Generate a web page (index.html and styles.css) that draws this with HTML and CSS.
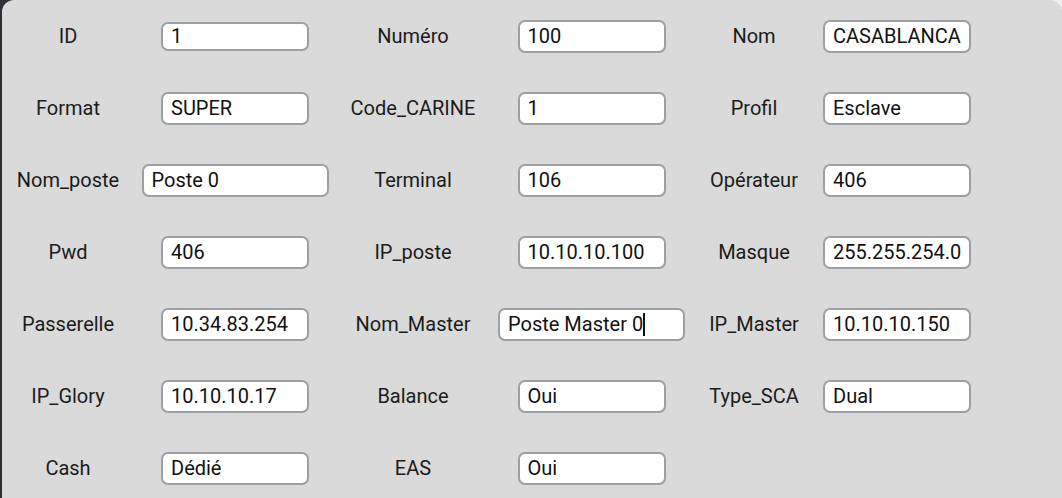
FILE: index.html
```html
<!DOCTYPE html>
<html lang="fr">
<head>
<meta charset="utf-8">
<title>Poste</title>
<link rel="stylesheet" href="styles.css">
</head>
<body>
<div class="panel">
  <div class="grid">
    <div class="label">ID</div><div class="cell"><div class="field short">1</div></div>
    <div class="label">Numéro</div><div class="cell"><div class="field">100</div></div>
    <div class="label">Nom</div><div class="cell"><div class="field">CASABLANCA</div></div>

    <div class="label">Format</div><div class="cell"><div class="field">SUPER</div></div>
    <div class="label">Code_CARINE</div><div class="cell"><div class="field">1</div></div>
    <div class="label">Profil</div><div class="cell"><div class="field">Esclave</div></div>

    <div class="label">Nom_poste</div><div class="cell"><div class="field wide">Poste 0</div></div>
    <div class="label">Terminal</div><div class="cell"><div class="field">106</div></div>
    <div class="label">Opérateur</div><div class="cell"><div class="field">406</div></div>

    <div class="label">Pwd</div><div class="cell"><div class="field">406</div></div>
    <div class="label">IP_poste</div><div class="cell"><div class="field">10.10.10.100</div></div>
    <div class="label">Masque</div><div class="cell"><div class="field">255.255.254.0</div></div>

    <div class="label">Passerelle</div><div class="cell"><div class="field">10.34.83.254</div></div>
    <div class="label">Nom_Master</div><div class="cell"><div class="field wide">Poste Master 0<span class="caret"></span></div></div>
    <div class="label">IP_Master</div><div class="cell"><div class="field">10.10.10.150</div></div>

    <div class="label">IP_Glory</div><div class="cell"><div class="field">10.10.10.17</div></div>
    <div class="label">Balance</div><div class="cell"><div class="field">Oui</div></div>
    <div class="label">Type_SCA</div><div class="cell"><div class="field">Dual</div></div>

    <div class="label">Cash</div><div class="cell"><div class="field">Dédié</div></div>
    <div class="label">EAS</div><div class="cell"><div class="field">Oui</div></div>
  </div>
</div>
</body>
</html>
```
FILE: styles.css
```css
html, body {
  margin: 0;
  padding: 0;
  height: 100%;
}
body {
  background: linear-gradient(to right, #2d3034 0 40px, #eeeeee 40px);
  font-family: Roboto, "Liberation Sans", sans-serif;
  font-size: 20px;
  color: #1b1b1b;
  overflow: hidden;
}
.panel {
  margin-left: 2px;
  height: 100%;
  background: #dadada;
  border-top-left-radius: 12px;
  border-top-right-radius: 12px;
}
.grid {
  display: grid;
  grid-template-columns: 132px 202px 154px 203px 122px 164px;
  grid-auto-rows: 72px;
  align-items: center;
}
.label {
  text-align: center;
  white-space: nowrap;
}
.cell {
  display: flex;
  justify-content: center;
  align-items: center;
}
.field {
  box-sizing: border-box;
  width: 148px;
  height: 33px;
  border: 2px solid #9c9fa4;
  border-radius: 7px;
  background: #ffffff;
  padding-left: 8px;
  display: flex;
  align-items: center;
  color: #111111;
  white-space: nowrap;
  overflow: hidden;
}
.field.short {
  height: 29px;
}
.field.wide {
  width: 187px;
}
.caret {
  display: inline-block;
  width: 2px;
  height: 23px;
  background: #111111;
  margin-left: 0;
}
```
